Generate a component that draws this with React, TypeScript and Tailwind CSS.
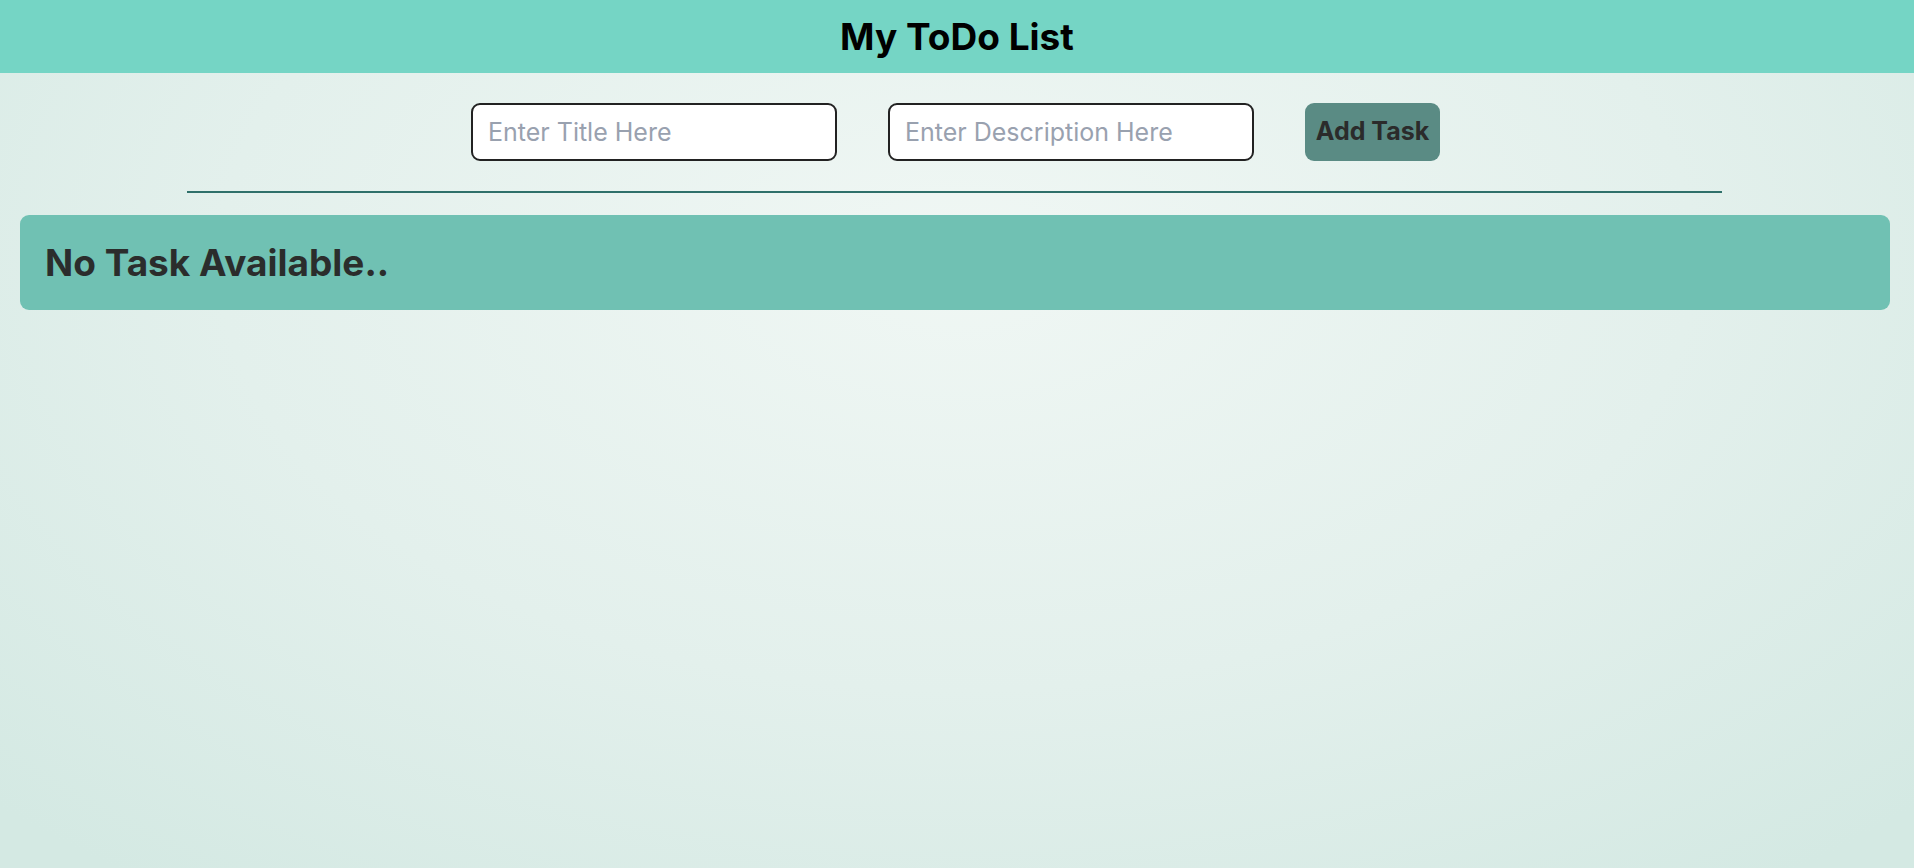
import { useState } from 'react';

type Task = { title: string; desc: string };

export default function App() {
    const [title, setTitle] = useState('');
    const [desc, setDesc] = useState('');
    const [tasks, setTasks] = useState<Task[]>([]);

    const addTask = () => {
        if (!title.trim()) return;
        setTasks([...tasks, { title, desc }]);
        setTitle('');
        setDesc('');
    };

    return (
        <div className="min-h-screen bg-[radial-gradient(ellipse_70%_90%_at_50%_30%,#f0f7f4_0%,#e3f0ec_55%,#d4e9e3_100%)] font-['Inter',sans-serif]">
            <header className="h-[73px] bg-[#75d5c5] flex items-center justify-center">
                <h1 className="text-[37px] font-bold text-black leading-none">My ToDo List</h1>
            </header>

            <div className="flex justify-center items-center gap-[51px] mt-[30px] pr-[3px]">
                <input
                    value={title}
                    onChange={(e) => setTitle(e.target.value)}
                    placeholder="Enter Title Here"
                    className="w-[366px] h-[58px] px-[15px] bg-white border-2 border-[#222] rounded-[9px] text-[25px] text-gray-800 placeholder:text-gray-400 outline-none"
                />
                <input
                    value={desc}
                    onChange={(e) => setDesc(e.target.value)}
                    placeholder="Enter Description Here"
                    className="w-[366px] h-[58px] px-[15px] bg-white border-2 border-[#222] rounded-[9px] text-[25px] text-gray-800 placeholder:text-gray-400 outline-none"
                />
                <button
                    onClick={addTask}
                    className="w-[135px] h-[58px] bg-[#5a8b84] rounded-[9px] text-[25px] font-bold text-[#2b2b2b]"
                >
                    Add Task
                </button>
            </div>

            <hr className="w-[1535px] ml-[187px] mt-[30px] border-0 h-[2px] bg-[#2f706a]" />

            <div className="ml-[20px] mr-[24px] mt-[22px]">
                {tasks.length === 0 ? (
                    <div className="h-[95px] bg-[#70c1b3] rounded-[9px] flex items-center px-[25px]">
                        <h2 className="text-[37px] font-bold text-[#2b2d2c] leading-none">No Task Available..</h2>
                    </div>
                ) : (
                    tasks.map((t, i) => (
                        <div key={i} className="bg-[#70c1b3] rounded-[9px] px-[25px] py-4 mb-3">
                            <h2 className="text-[28px] font-bold text-[#2b2d2c]">{t.title}</h2>
                            <p className="text-lg text-[#2b2d2c]">{t.desc}</p>
                        </div>
                    ))
                )}
            </div>
        </div>
    );
}
